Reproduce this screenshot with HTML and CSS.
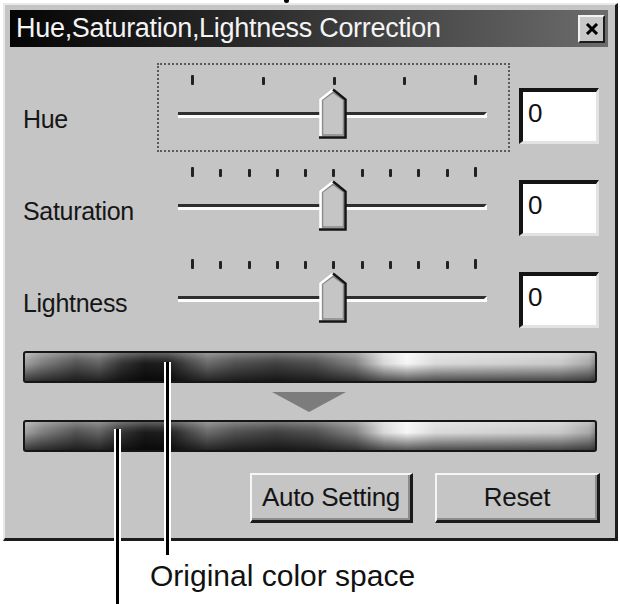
FILE: index.html
```html
<!DOCTYPE html>
<html lang="en">
<head>
    <meta charset="UTF-8">
    <meta name="viewport" content="width=device-width, initial-scale=1.0">
    <title>Hue, Saturation, Lightness Correction</title>
    <link rel="stylesheet" href="styles.css">
</head>
<body>
    <div class="page">
        <div class="dialog">
            <div class="titlebar">
                <span class="title">Hue,Saturation,Lightness Correction</span>
                <button class="close" type="button">
                    <svg width="14" height="12" viewBox="0 0 14 12">
                        <path d="M2 1 L12 11 M12 1 L2 11" stroke="#000" stroke-width="3" fill="none"/>
                    </svg>
                </button>
            </div>

            <div class="rows">
                <div class="row">
                    <label class="row-label" for="hue">Hue</label>
                    <div class="slider focused">
                        <div class="ticks">
                            <i class="tick end"></i><i class="tick"></i><i class="tick"></i><i class="tick"></i><i class="tick end"></i>
                        </div>
                        <div class="track"></div>
                        <svg class="thumb" width="28" height="51" viewBox="0 0 28 51">
                            <path d="M1 50 V11 L14 1 L27 11 V50 Z" fill="#c5c5c5"/>
                            <path d="M3.5 47 V12 L14 4.5 L24.5 12 V47 Z" fill="none" stroke="#8a8a8a" stroke-width="1.5"/>
                            <path d="M1.5 49 V11.5 L14 1.8" fill="none" stroke="#fff" stroke-width="2.5"/>
                            <path d="M14 1.5 L26.5 11.5 V49.5 H0" fill="none" stroke="#141414" stroke-width="2.5"/>
                        </svg>
                    </div>
                    <input class="value" id="hue" type="text" value="0">
                </div>

                <div class="row">
                    <label class="row-label" for="saturation">Saturation</label>
                    <div class="slider">
                        <div class="ticks">
                            <i class="tick end"></i><i class="tick"></i><i class="tick"></i><i class="tick"></i><i class="tick"></i><i class="tick"></i><i class="tick"></i><i class="tick"></i><i class="tick"></i><i class="tick"></i><i class="tick end"></i>
                        </div>
                        <div class="track"></div>
                        <svg class="thumb" width="28" height="51" viewBox="0 0 28 51">
                            <path d="M1 50 V11 L14 1 L27 11 V50 Z" fill="#c5c5c5"/>
                            <path d="M3.5 47 V12 L14 4.5 L24.5 12 V47 Z" fill="none" stroke="#8a8a8a" stroke-width="1.5"/>
                            <path d="M1.5 49 V11.5 L14 1.8" fill="none" stroke="#fff" stroke-width="2.5"/>
                            <path d="M14 1.5 L26.5 11.5 V49.5 H0" fill="none" stroke="#141414" stroke-width="2.5"/>
                        </svg>
                    </div>
                    <input class="value" id="saturation" type="text" value="0">
                </div>

                <div class="row">
                    <label class="row-label" for="lightness">Lightness</label>
                    <div class="slider">
                        <div class="ticks">
                            <i class="tick end"></i><i class="tick"></i><i class="tick"></i><i class="tick"></i><i class="tick"></i><i class="tick"></i><i class="tick"></i><i class="tick"></i><i class="tick"></i><i class="tick"></i><i class="tick end"></i>
                        </div>
                        <div class="track"></div>
                        <svg class="thumb" width="28" height="51" viewBox="0 0 28 51">
                            <path d="M1 50 V11 L14 1 L27 11 V50 Z" fill="#c5c5c5"/>
                            <path d="M3.5 47 V12 L14 4.5 L24.5 12 V47 Z" fill="none" stroke="#8a8a8a" stroke-width="1.5"/>
                            <path d="M1.5 49 V11.5 L14 1.8" fill="none" stroke="#fff" stroke-width="2.5"/>
                            <path d="M14 1.5 L26.5 11.5 V49.5 H0" fill="none" stroke="#141414" stroke-width="2.5"/>
                        </svg>
                    </div>
                    <input class="value" id="lightness" type="text" value="0">
                </div>
            </div>

            <div class="bars">
                <div class="spectrum"></div>
                <div class="arrow"></div>
                <div class="spectrum"></div>
            </div>

            <div class="buttons">
                <button class="btn btn-auto" type="button">Auto Setting</button>
                <button class="btn btn-reset" type="button">Reset</button>
            </div>
        </div>

        <p class="caption">Original color space</p>

        <!-- linhas de chamada -->
        <span class="leader leader-original"></span>
        <span class="leader leader-new"></span>
        <span class="leader-stub"></span>
    </div>
</body>
</html>
```

FILE: styles.css
```css
/* Reset básico */
* {
    margin: 0;
    padding: 0;
    box-sizing: border-box;
}

body {
    background-color: #ffffff;
    font-family: "Liberation Sans", Arial, sans-serif;
    color: #111;
}

.page {
    position: relative;
    width: 620px;
    height: 604px;
    overflow: hidden;
}

/* Janela do diálogo */
.dialog {
    margin: 3px 0 0 3px;
    width: 615px;
    height: 538px;
    background-color: #c5c5c5;
    border-top: 2px solid #e9e9e9;
    border-left: 2px solid #e9e9e9;
    border-right: 3px solid #1c1c1c;
    border-bottom: 3px solid #1c1c1c;
    padding: 5px 7px 0 5px;
}

/* Barra de título */
.titlebar {
    height: 37px;
    display: flex;
    align-items: center;
    justify-content: space-between;
    padding: 0 3px 0 6px;
    background: linear-gradient(to right, #050505 0%, #2a2a2a 40%, #6c6c6c 100%);
}

.title {
    color: #f4f4f4;
    font-size: 27px;
    letter-spacing: -0.3px;
    white-space: nowrap;
}

.close {
    width: 27px;
    height: 28px;
    display: flex;
    align-items: center;
    justify-content: center;
    background-color: #c8c8c8;
    border-top: 2px solid #f2f2f2;
    border-left: 2px solid #f2f2f2;
    border-right: 2px solid #1c1c1c;
    border-bottom: 2px solid #1c1c1c;
}

/* Linhas dos controles deslizantes */
.rows {
    margin-top: 16px;
}

.row {
    height: 92px;
    display: flex;
    align-items: flex-start;
    padding-left: 13px;
}

.row-label {
    width: 134px;
    padding-top: 41px;
    font-size: 25px;
    line-height: 30px;
    letter-spacing: -0.3px;
    color: #161616;
    white-space: nowrap;
}

.slider {
    position: relative;
    width: 353px;
    height: 89px;
    border: 2px dotted transparent;
}

.slider.focused {
    border-color: #5a5a5a;
}

.ticks {
    margin: 10px 0 0 32px;
    width: 286px;
    height: 10px;
    display: flex;
    justify-content: space-between;
    align-items: flex-end;
}

.tick {
    display: block;
    width: 3px;
    height: 8px;
    background-color: #222;
    border-radius: 1px;
}

.tick.end {
    height: 10px;
}

.track {
    margin: 27px 0 0 19px;
    width: 309px;
    height: 6px;
    border-top: 3px solid #2e2e2e;
    border-bottom: 3px solid #fbfbfb;
    border-right: 3px solid #fbfbfb;
}

.thumb {
    position: absolute;
    left: 160px;
    top: 23px;
}

/* Caixas de valor */
.value {
    margin: 25px 0 0 9px;
    width: 80px;
    height: 56px;
    background-color: #ffffff;
    border-top: 4px solid #141414;
    border-left: 4px solid #141414;
    border-right: 3px solid #e2e2e2;
    border-bottom: 3px solid #e2e2e2;
    padding: 0 0 6px 5px;
    font-family: "Liberation Sans", Arial, sans-serif;
    font-size: 26px;
    color: #111;
    outline: none;
}

/* Barras de espectro */
.bars {
    margin: 12px 0 0 13px;
    width: 574px;
}

.spectrum {
    height: 32px;
    border: 2px solid #161616;
    border-radius: 3px;
    background:
        linear-gradient(to bottom, rgba(255, 255, 255, 0.3) 0%, rgba(255, 255, 255, 0.1) 22%, rgba(255, 255, 255, 0) 38%, rgba(0, 0, 0, 0.25) 62%, rgba(0, 0, 0, 0.65) 100%),
        linear-gradient(to right, #a0a0a0 0%, #7e7e7e 3%, #525252 9%, #626262 13%, #333333 17%, #1a1a1a 21%, #1e1e1e 25%, #4a4a4a 29%, #6a6a6a 32%, #505050 37%, #404040 44%, #505050 51%, #828282 58%, #d8d8d8 63%, #f6f6f6 67%, #dadada 72%, #d0d0d0 85%, #c8c8c8 94%, #a8a8a8 99%, #888888 100%);
}

.arrow {
    margin: 9px 0 8px 249px;
    width: 0;
    height: 0;
    border-left: 37px solid transparent;
    border-right: 37px solid transparent;
    border-top: 20px solid #7c7c7c;
}

/* Botões */
.buttons {
    margin-top: 21px;
    display: flex;
    justify-content: flex-end;
    gap: 22px;
    padding-right: 8px;
}

.btn {
    height: 50px;
    background-color: #c5c5c5;
    border-top: 2px solid #f6f6f6;
    border-left: 2px solid #f6f6f6;
    border-right: 3px solid #1a1a1a;
    border-bottom: 3px solid #1a1a1a;
    box-shadow: inset -2px -2px 0 #8c8c8c;
    font-family: "Liberation Sans", Arial, sans-serif;
    font-size: 26px;
    color: #151515;
    letter-spacing: -0.3px;
}

.btn-auto {
    width: 163px;
}

.btn-reset {
    width: 165px;
}

/* Legenda e linhas de chamada */
.caption {
    margin: 18px 0 0 150px;
    font-size: 30px;
    line-height: 34px;
    color: #111;
}

.leader {
    position: absolute;
    width: 7px;
    background-color: #000;
    border-left: 2px solid #fff;
    border-right: 2px solid #fff;
}

.leader-original {
    left: 164px;
    top: 362px;
    height: 193px;
}

.leader-new {
    left: 114px;
    top: 429px;
    height: 175px;
}

.leader-stub {
    position: absolute;
    left: 284px;
    top: 0;
    width: 5px;
    height: 3px;
    background-color: #000;
    border-radius: 0 0 3px 3px;
}
```
